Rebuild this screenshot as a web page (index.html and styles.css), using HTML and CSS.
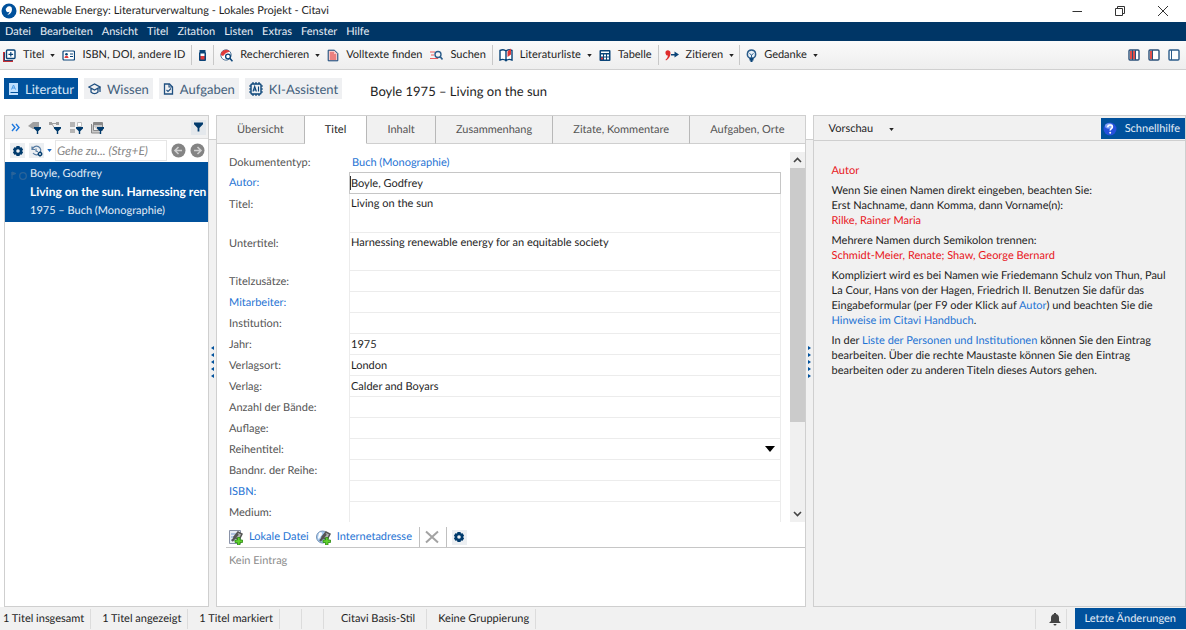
FILE: index.html
```
<!DOCTYPE html>
<html lang="de">
<head>
    <meta charset="UTF-8">
    <meta name="viewport" content="width=device-width, initial-scale=1.0">
    <title>Renewable Energy: Literaturverwaltung - Lokales Projekt - Citavi</title>
    <link rel="stylesheet" href="styles.css">
</head>
<body>
    <!-- Wiederverwendete Symbole -->
    <svg class="sprite" aria-hidden="true">
        <symbol id="caret" viewBox="0 0 6 4"><path d="M0 0h6L3 4z" fill="#222"/></symbol>
        <symbol id="funnel" viewBox="0 0 10 10"><path d="M0 0h10v2L6 6v4H4V6L0 2z" fill="#003a6c"/></symbol>
        <symbol id="gear" viewBox="0 0 12 12">
            <path d="M4.5 1h3l.5 1.5 1.6-.2 1.5 2.5L10 6l1.1 1.2-1.5 2.5-1.6-.2L7.5 11h-3L4 9.5l-1.6.2L.9 7.2 2 6 .9 4.8l1.5-2.5 1.6.2z" fill="#003a6c"/>
            <circle cx="6" cy="6" r="1.8" fill="#eef1f4"/>
        </symbol>
        <symbol id="link-chain" viewBox="0 0 16 16">
            <path d="M6 8l4-5 4 2-3 6z" fill="#b5b5b5" stroke="#555" stroke-width="1.5"/>
            <path d="M4 12l6-7" stroke="#555" stroke-width="2.2"/>
            <path d="M9.500 8.500h2.500v2.500h2.500v2.500H12V16H9.500v-2.500H7V11h2.500z" fill="#5fd02c" stroke="#2c8a12" stroke-width=".8"/>
        </symbol>
    </svg>

    <header class="titlebar">
        <svg class="logo" width="16" height="16" viewBox="0 0 16 16"><circle cx="8" cy="8" r="7.5" fill="#00519c"/><path d="M5.800 4.600a2.800 2.800 0 0 1 5.200 1.600c0 2.800-1.700 5-4.700 5.800 1.300-1.100 2-2.200 2.200-3.400A2.300 2.300 0 0 1 5.800 4.600z" fill="#fff"/></svg>
        <h1>Renewable Energy: Literaturverwaltung - Lokales Projekt - Citavi</h1>
        <div class="window-buttons">
            <button aria-label="Minimieren"><svg width="12" height="12" viewBox="0 0 12 12"><path d="M1.500 6.500h9.500" stroke="#333"/></svg></button>
            <button aria-label="Wiederherstellen"><svg width="12" height="12" viewBox="0 0 12 12"><path d="M1.500 3.500h7v7h-7zM3.500 3.500v-2h7v7h-2" fill="none" stroke="#333"/></svg></button>
            <button aria-label="Schließen"><svg width="12" height="12" viewBox="0 0 12 12"><path d="M1 1l10 10M11 1L1 11" stroke="#333"/></svg></button>
        </div>
    </header>

    <nav class="menubar">
        <a href="#">Datei</a>
        <a href="#">Bearbeiten</a>
        <a href="#">Ansicht</a>
        <a href="#">Titel</a>
        <a href="#">Zitation</a>
        <a href="#">Listen</a>
        <a href="#">Extras</a>
        <a href="#">Fenster</a>
        <a href="#">Hilfe</a>
    </nav>

    <div class="toolbar">
        <button>
            <svg width="13" height="13" viewBox="0 0 13 13"><path d="M1 3v9h9" fill="none" stroke="#c62f35" stroke-width="2"/><path d="M1.500 4v7.500h8" fill="none" stroke="#0a4478" stroke-width=".8"/><rect x="3.500" y="1" width="8.500" height="8.500" rx="1" fill="#fff" stroke="#0a4478" stroke-width="1.400"/><path d="M7.800 3v4.600M5.500 5.300h4.600" stroke="#0a4478" stroke-width="1.200"/></svg>
            <span>Titel</span><svg class="caret"><use href="#caret"/></svg>
        </button>
        <button>
            <svg width="13" height="13" viewBox="0 0 13 13"><rect x="1" y="2" width="11.500" height="9" rx="1" fill="#fff" stroke="#0a4478" stroke-width="1.200"/><circle cx="4.500" cy="5.300" r="1.300" fill="#0a4478"/><path d="M2.500 9c0-3 4-3 4 0z" fill="#e03a3a"/><path d="M8 5h3M8 7.500h3" stroke="#0a4478"/></svg>
            <span>ISBN, DOI, andere ID</span>
        </button>
        <i class="sep"></i>
        <button aria-label="Picker">
            <svg width="9" height="13" viewBox="0 0 9 13"><path d="M1.500 1h6v2h-6z" fill="#0a4478"/><rect x="1" y="3" width="7" height="9" rx="1" fill="#0a4478"/><path d="M2.500 4.500h4v2.500h-4z" fill="#fff"/><path d="M2.500 7h4v3.500h-4z" fill="#e03a3a"/></svg>
        </button>
        <i class="sep"></i>
        <button>
            <svg width="13" height="13" viewBox="0 0 13 13"><circle cx="6" cy="6" r="5.200" fill="#fff" stroke="#55779a"/><path d="M.8 6A5.300 5.300 0 0 1 10 2.500L6 4 3 7z" fill="#e03a3a"/><circle cx="8" cy="7.500" r="2.400" fill="#fff" stroke="#0a4478" stroke-width="1.300"/><path d="M9.800 9.300l2.700 3" stroke="#0a4478" stroke-width="1.600"/></svg>
            <span>Recherchieren</span><svg class="caret"><use href="#caret"/></svg>
        </button>
        <button>
            <svg width="12" height="13" viewBox="0 0 12 13"><path d="M1.200 1.200h6.300l3.300 3.300v7.300H1.200z" fill="#f7c6c6" stroke="#0a4478"/><path d="M3 4h4M3 6h6M3 8h6M3 10h6" stroke="#e03a3a" stroke-width="1.200"/></svg>
            <span>Volltexte finden</span>
        </button>
        <button>
            <svg width="13" height="13" viewBox="0 0 13 13"><path d="M0 3h5M1 6h3M0 9.500h8" stroke="#ec5a5a" stroke-width="1.200"/><circle cx="8" cy="5.500" r="3" fill="none" stroke="#2b5c8a" stroke-width="1.400"/><path d="M10 7.500l2.500 3" stroke="#2b5c8a" stroke-width="1.600"/></svg>
            <span>Suchen</span>
        </button>
        <i class="sep"></i>
        <button>
            <svg width="14" height="14" viewBox="0 0 14 14"><path d="M1 2.500c2-1 4.500-1 6 .5 1.500-1.500 4-1.500 6-.5v9.500c-2-.8-4.500-.8-6 .8-1.500-1.600-4-1.600-6-.8zM7 3v9" fill="#fff" stroke="#0a4478" stroke-width="1.400"/><path d="M8.500 9V3.500L12 .5v6z" fill="#e03a3a"/></svg>
            <span>Literaturliste</span><svg class="caret"><use href="#caret"/></svg>
        </button>
        <button>
            <svg width="12" height="13" viewBox="0 0 12 13"><rect x=".5" y="1" width="11" height="11" rx="1" fill="#0a4478"/><path d="M2 2.500h8v1.500H2zM2 5.500h2v2H2zM5 5.500h2v2H5zM8 5.500h2v2H8zM5 8.500h2v2H5zM8 8.500h2v2H8z" fill="#fff"/><path d="M2 8.500h2v2H2z" fill="#e03a3a"/></svg>
            <span>Tabelle</span>
        </button>
        <i class="sep"></i>
        <button>
            <svg width="14" height="13" viewBox="0 0 14 13"><path d="M.8 2.200C2 .5 5.500.8 5.500 4c0 3-1.500 5.800-4.500 7.500l-.5-.7c1.600-1.300 2.300-2.800 2.400-4.200C1 6.800-.2 4 .8 2.200z" fill="#df2b2b"/><path d="M6 5h3.500V2.500L14 5.500 9.500 8.500V6.500H6z" fill="#0a4478"/></svg>
            <span>Zitieren</span><svg class="caret"><use href="#caret"/></svg>
        </button>
        <i class="sep"></i>
        <button>
            <svg width="11" height="13" viewBox="0 0 11 13"><path d="M3.500 9C0 6.500.8 1 5.500 1s5.500 5.500 2 8z" fill="#e8f0f7" stroke="#2b5c8a" stroke-width="1.400"/><path d="M3.500 4.500l2 1.500 2-1.500M5.500 6v3" fill="none" stroke="#2b5c8a"/><path d="M3.500 9h4v2.500h-1V13h-2v-1.500h-1z" fill="#0a4478"/></svg>
            <span>Gedanke</span><svg class="caret"><use href="#caret"/></svg>
        </button>
        <div class="layouts">
            <button aria-label="Drei Spalten"><svg width="12" height="12" viewBox="0 0 12 12"><rect x="1" y="1" width="10" height="10" rx="1" fill="#fff" stroke="#2b5078" stroke-width="1.400"/><path d="M2 2h5v8H2z" fill="#e0504a"/><path d="M4.500 1v10M7.500 1v10" stroke="#2b5078"/></svg></button>
            <button aria-label="Zwei Spalten"><svg width="12" height="12" viewBox="0 0 12 12"><rect x="1" y="1" width="10" height="10" rx="1" fill="#fff" stroke="#2b5078" stroke-width="1.400"/><path d="M2 2h2v8H2z" fill="#e0504a"/><path d="M4.500 1v10" stroke="#2b5078"/></svg></button>
            <button aria-label="Eine Spalte"><svg width="12" height="12" viewBox="0 0 12 12"><rect x="1" y="1" width="10" height="10" rx="1" fill="#fff" stroke="#2b5c8a" stroke-width="1.400"/><path d="M3.500 1v10" stroke="#2b5c8a"/></svg></button>
        </div>
    </div>

    <div class="workspaces">
        <button class="active">
            <svg width="11" height="12" viewBox="0 0 11 12"><path d="M1 0h9v9H2.500v1H10v2H1z" fill="#bfe0ff"/><path d="M3.500 6.500L5.500 2l2 4.500M4.200 5h2.600" fill="none" stroke="#4a9be6"/></svg>
            <span>Literatur</span>
        </button>
        <button>
            <svg width="13" height="12" viewBox="0 0 13 12"><path d="M1 4l5.500-3L12 4 6.500 7zM3 5.500V9c2 2 5 2 7 0V5.500M12 4v5" fill="none" stroke="#1f4f80" stroke-width="1.300"/></svg>
            <span>Wissen</span>
        </button>
        <button>
            <svg width="11" height="12" viewBox="0 0 11 12"><path d="M1.500 1h5L9.500 4v7h-8z" fill="none" stroke="#1f4f80" stroke-width="1.300"/><path d="M6 1v3h3.500M3.500 7l1.500 1.500L8 5.500" fill="none" stroke="#1f4f80" stroke-width="1.100"/></svg>
            <span>Aufgaben</span>
        </button>
        <button>
            <svg width="14" height="14" viewBox="0 0 14 14"><path d="M4 0v14M7 0v14M10 0v14M0 4h14M0 7h14M0 10h14" stroke="#0a4478" stroke-width="1.200"/><rect x="2" y="2" width="10" height="10" rx="1" fill="#eef1f4" stroke="#0a4478" stroke-width="1.400"/><path d="M4 9.500L5.700 4.500l1.700 5M4.700 8h2M9.500 4.500v5" fill="none" stroke="#0a4478" stroke-width="1.100"/></svg>
            <span>KI-Assistent</span>
        </button>
        <h2>Boyle 1975 – Living on the sun</h2>
    </div>

    <main>
        <section class="panel list">
            <div class="filters">
                <button aria-label="Erweitern"><svg width="9" height="9" viewBox="0 0 9 9"><path d="M1 1l3 3.500L1 8M5 1l3 3.500L5 8" fill="none" stroke="#1c78e0" stroke-width="1.400"/></svg></button>
                <button aria-label="Schlagwörter"><svg width="13" height="13" viewBox="0 0 13 13"><path d="M0 5l5-4h6v7H5z" fill="#a0a0a0"/><use href="#funnel" x="6" y="6" width="7" height="7"/></svg></button>
                <button aria-label="Kategorien"><svg width="13" height="13" viewBox="0 0 13 13"><path d="M0 1h3v3H0zM7 1h3v3H7z" fill="#a0a0a0"/><path d="M3 2.500h4M3 3l3 5" fill="none" stroke="#a0a0a0"/><use href="#funnel" x="5" y="6" width="7" height="7"/></svg></button>
                <button aria-label="Gruppen"><svg width="13" height="13" viewBox="0 0 13 13"><path d="M0 1h5v5H0zM0 8h5v4H0z" fill="#b5b5b5"/><path d="M7.500 1.500h4v4h-4z" fill="#fff" stroke="#c0c0c0"/><use href="#funnel" x="6" y="6" width="7" height="7"/></svg></button>
                <button aria-label="Importe"><svg width="13" height="13" viewBox="0 0 13 13"><path d="M.5 3v9h9M2.500 1.500h9v8h-9z" fill="#c9c9c9" stroke="#8a8a8a"/><path d="M2 2h10v2H2z" fill="#8a8a8a"/><use href="#funnel" x="6" y="6" width="7" height="7"/></svg></button>
                <button class="boxed end" aria-label="Filter"><svg width="9" height="10"><use href="#funnel"/></svg></button>
            </div>
            <div class="search">
                <button class="boxed" aria-label="Einstellungen"><svg width="12" height="12"><use href="#gear"/></svg></button>
                <button class="boxed history" aria-label="Verlauf"><svg width="12" height="12" viewBox="0 0 12 12"><path d="M1 1.500v3h3M1.300 4.500A4.300 4.300 0 1 1 2 8M5 3.500V6l2 .8" fill="none" stroke="#587da3" stroke-width="1.200"/><use href="#gear" x="6" y="6" width="6" height="6"/></svg></button>
                <svg class="caret" viewBox="0 0 6 4"><path d="M0 0h6L3 4z" fill="#1c68c0"/></svg>
                <input type="text" placeholder="Gehe zu... (Strg+E)" aria-label="Gehe zu">
                <button class="round" aria-label="Zurück"><svg width="15" height="15" viewBox="0 0 15 15"><circle cx="7.500" cy="7.500" r="7" fill="#848484"/><path d="M7.500 4L4 7.500 7.500 11M4 7.500h7" fill="none" stroke="#d0d0d0" stroke-width="1.600"/></svg></button>
                <button class="round" aria-label="Vor"><svg width="15" height="15" viewBox="0 0 15 15"><circle cx="7.500" cy="7.500" r="7" fill="#848484"/><path d="M7.500 4L11 7.500 7.500 11M11 7.500H4" fill="none" stroke="#d0d0d0" stroke-width="1.600"/></svg></button>
            </div>
            <article class="entry">
                <svg width="18" height="12" viewBox="0 0 18 12"><path d="M2 3v7M2 3l4 1.500L2 6z" fill="#2a649a" stroke="#2a649a"/><circle cx="13" cy="7" r="3.300" fill="none" stroke="#2a649a" stroke-width="1.300"/></svg>
                <div>
                    <p>Boyle, Godfrey</p>
                    <p><b>Living on the sun. Harnessing ren</b></p>
                    <p>1975 – Buch (Monographie)</p>
                </div>
            </article>
        </section>

        <div class="splitter"><i></i><i></i><i></i><i></i><i></i></div>

        <section class="panel details">
            <div class="tabs" role="tablist">
                <button role="tab">Übersicht</button>
                <button role="tab" class="active" aria-selected="true">Titel</button>
                <button role="tab">Inhalt</button>
                <button role="tab">Zusammenhang</button>
                <button role="tab">Zitate, Kommentare</button>
                <button role="tab">Aufgaben, Orte</button>
            </div>
            <div class="scroll">
                <form>
                    <span>Dokumententyp:</span><a class="type" href="#">Buch (Monographie)</a>
                    <label for="autor" class="link">Autor:</label><input id="autor" type="text" value="Boyle, Godfrey">
                    <label for="titel">Titel:</label><textarea id="titel">Living on the sun</textarea>
                    <label for="untertitel">Untertitel:</label><textarea id="untertitel">Harnessing renewable energy for an equitable society</textarea>
                    <label for="zusatz">Titelzusätze:</label><input id="zusatz" type="text">
                    <label for="mitarbeiter" class="link">Mitarbeiter:</label><input id="mitarbeiter" type="text">
                    <label for="institution">Institution:</label><input id="institution" type="text">
                    <label for="jahr">Jahr:</label><input id="jahr" type="text" value="1975">
                    <label for="ort">Verlagsort:</label><input id="ort" type="text" value="London">
                    <label for="verlag">Verlag:</label><input id="verlag" type="text" value="Calder and Boyars">
                    <label for="baende">Anzahl der Bände:</label><input id="baende" type="text">
                    <label for="auflage">Auflage:</label><input id="auflage" type="text">
                    <label for="reihe">Reihentitel:</label>
                    <div class="select"><select id="reihe"><option></option></select><svg width="10" height="6" viewBox="0 0 10 6"><path d="M0 0h10L5 6z"/></svg></div>
                    <label for="bandnr">Bandnr. der Reihe:</label><input id="bandnr" type="text">
                    <label for="isbn" class="link">ISBN:</label><input id="isbn" type="text">
                    <label for="medium">Medium:</label><input id="medium" type="text">
                </form>
                <div class="scrollbar">
                    <button aria-label="Nach oben"><svg width="9" height="6" viewBox="0 0 9 6"><path d="M1 5l3.500-3.500L8 5" fill="none" stroke="#444" stroke-width="1.600"/></svg></button>
                    <div class="track"><div class="thumb"></div></div>
                    <button aria-label="Nach unten"><svg width="9" height="6" viewBox="0 0 9 6"><path d="M1 1l3.500 3.500L8 1" fill="none" stroke="#444" stroke-width="1.600"/></svg></button>
                </div>
            </div>
            <div class="attachments">
                <a href="#"><svg width="16" height="16" viewBox="0 0 16 16"><path d="M1.500 1.500h11v13h-11z" fill="#e9edf5" stroke="#8a93a8"/><path d="M3 5h5M3 8h4M3 11h4" stroke="#7a9ad0"/><use href="#link-chain"/></svg>Lokale Datei</a>
                <a href="#"><svg width="16" height="16" viewBox="0 0 16 16"><circle cx="6.500" cy="8" r="6" fill="#a9ccf0" stroke="#7592b5"/><path d="M3 4c3-2 4 1 2 3s-2 4-3 2z" fill="#fff"/><use href="#link-chain"/></svg>Internetadresse</a>
                <i></i>
                <button aria-label="Entfernen"><svg width="14" height="14" viewBox="0 0 14 14"><path d="M1 1.500l12 11M13 1.500l-12 11" stroke="#a3a3a3" stroke-width="2"/></svg></button>
                <i></i>
                <button class="boxed" aria-label="Optionen"><svg width="12" height="12"><use href="#gear"/></svg></button>
            </div>
            <p class="empty">Kein Eintrag</p>
        </section>

        <div class="splitter right"><i></i><i></i><i></i><i></i><i></i></div>

        <aside class="panel help">
            <div class="help-tabs">
                <button>Vorschau<svg class="caret"><use href="#caret"/></svg></button>
                <button class="active"><svg width="14" height="14" viewBox="0 0 14 14"><circle cx="7" cy="7" r="6.500" fill="#2450dc"/><ellipse cx="6" cy="4" rx="4" ry="2.800" fill="#7fa0f5"/><path d="M4.800 5.200c0-3 4.600-2.800 4.600-.2C9.400 6.700 7.200 6.600 7.200 8.500" fill="none" stroke="#fff" stroke-width="1.600"/><circle cx="7.200" cy="10.800" r="1" fill="#fff"/></svg>Schnellhilfe</button>
            </div>
            <div class="help-text">
                <p class="red">Autor</p>
                <p>Wenn Sie einen Namen direkt eingeben, beachten Sie:<br>Erst Nachname, dann Komma, dann Vorname(n):<br><span class="red">Rilke, Rainer Maria</span></p>
                <p>Mehrere Namen durch Semikolon trennen:<br><span class="red">Schmidt-Meier, Renate; Shaw, George Bernard</span></p>
                <p>Kompliziert wird es bei Namen wie Friedemann Schulz von Thun, Paul La Cour, Hans von der Hagen, Friedrich II. Benutzen Sie dafür das Eingabeformular (per F9 oder Klick auf <a href="#">Autor</a>) und beachten Sie die <a href="#">Hinweise im Citavi Handbuch</a>.</p>
                <p>In der <a href="#">Liste der Personen und Institutionen</a> können Sie den Eintrag bearbeiten. Über die rechte Maustaste können Sie den Eintrag bearbeiten oder zu anderen Titeln dieses Autors gehen.</p>
            </div>
        </aside>
    </main>

    <footer class="statusbar">
        <span>1 Titel insgesamt</span>
        <span>1 Titel angezeigt</span>
        <span>1 Titel markiert</span>
        <span class="blank"></span>
        <span class="blank"></span>
        <span class="style">Citavi Basis-Stil</span>
        <span>Keine Gruppierung</span>
        <button class="bell" aria-label="Benachrichtigungen"><svg width="12" height="14" viewBox="0 0 12 14"><path d="M5 1h2v1c2 .5 3 2 3 4v3l2 2H0l2-2V6c0-2 1-3.500 3-4zM4.500 12h3a1.500 1.500 0 0 1-3 0z" fill="#444"/></svg></button>
        <button class="changes">Letzte Änderungen</button>
    </footer>
</body>
</html>
```
FILE: styles.css
```
* {
    box-sizing: border-box;
}
body {
    margin: 0;
    height: 100vh;
    display: flex;
    flex-direction: column;
    background: #fff;
    color: #1e1e1e;
    font: 11px/16px Lato, "Open Sans", sans-serif;
    text-rendering: geometricPrecision;
}
button, input, textarea, select {
    font: inherit;
    color: inherit;
    text-rendering: inherit;
    margin: 0;
    padding: 0;
    border: 0;
    border-radius: 0;
    background: none;
    outline: 0;
}
button {
    display: flex;
    align-items: center;
    white-space: nowrap;
}
h1, h2, p {
    margin: 0;
    font-size: inherit;
    font-weight: normal;
}
a {
    color: #1f74d4;
    text-decoration: none;
}
svg {
    flex: none;
}
.sprite {
    position: absolute;
    width: 0;
    height: 0;
}
.caret {
    width: 5px;
    height: 3px;
    margin: 0 -1px;
}
.boxed {
    background: #eceff2;
    justify-content: center;
    width: 15px;
    height: 15px;
}

/* Titelleiste und Menü */
.titlebar {
    display: flex;
    align-items: center;
    height: 22px;
    padding: 0 17px 0 1px;
    gap: 2px;
}
.window-buttons {
    display: flex;
    gap: 31px;
    margin-left: auto;
}
.menubar {
    display: flex;
    align-items: center;
    height: 19px;
    padding: 0 5px;
    gap: 9px;
    background: #003666;
}
.menubar a {
    color: #e6edf5;
}

/* Werkzeugleiste */
.toolbar {
    display: flex;
    align-items: center;
    height: 29px;
    padding: 0 6px 0 3px;
    gap: 8px;
    background: linear-gradient(#fafafa, #eee);
    border-bottom: 1px solid #d0d0d0;
}
.toolbar button {
    gap: 7px;
}
.sep {
    width: 1px;
    height: 20px;
    margin: 0 -2px;
    background: #c8c8c8;
}
.layouts {
    display: flex;
    gap: 8px;
    margin-left: auto;
}

.workspaces {
    display: flex;
    align-items: center;
    height: 45px;
    padding: 0 4px 8px;
    gap: 6px;
    font-size: 13px;
}
.workspaces button {
    height: 21px;
    padding: 0 4px;
    gap: 6px;
    background: #eff0f2;
    color: #44607c;
}
.workspaces button.active {
    background: #00519c;
    color: #d5e6f7;
}
.workspaces h2 {
    margin-left: 22px;
    padding-top: 4px;
}

/* Arbeitsbereich */
main {
    flex: 1;
    min-height: 0;
    display: flex;
    padding-left: 4px;
}
.panel {
    display: flex;
    flex-direction: column;
    min-width: 0;
    background: #fff;
    border: 1px solid #cfcfcf;
}
.splitter {
    flex: none;
    width: 7px;
    margin-top: 24px;
    padding-bottom: 24px;
    border-top: 1px solid #cfcfcf;
    background: #f1f1f1;
    display: flex;
    flex-direction: column;
    align-items: center;
    justify-content: center;
    gap: 3px;
}
.splitter i {
    border: 2px solid transparent;
    border-left: 0;
    border-right: 3px solid #00519c;
}
.splitter.right i {
    border-right: 0;
    border-left: 3px solid #00519c;
}

.list {
    flex: none;
    width: 205px;
}
.filters {
    display: flex;
    align-items: center;
    height: 23px;
    padding: 0 2px 0 6px;
    gap: 8px;
    background: #f1f1f1;
    border-bottom: 1px solid #ddd;
}
.filters .end {
    margin-left: auto;
    background: #e4e8ec;
}
.search {
    display: flex;
    align-items: center;
    height: 23px;
    padding: 0 3px 0 5px;
    gap: 4px;
}
.search input {
    flex: 1;
    min-width: 0;
    height: 21px;
    padding-left: 1px;
    border: 1px solid #e6e6e6;
    font-size: 12px;
    font-style: italic;
}
.search input::placeholder {
    color: #858585;
}
.entry {
    display: flex;
    align-items: flex-start;
    gap: 2px;
    height: 60px;
    padding: 3px 2px 2px 5px;
    background: #00519c;
    color: #e3edf7;
    white-space: nowrap;
    overflow: hidden;
}
.entry svg {
    margin-top: 4px;
}
.entry p {
    line-height: 18px;
}
.entry b {
    color: #fff;
    font-size: 12px;
}

/* Formular */
.details {
    flex: 590 1 0;
}
.tabs {
    display: flex;
    height: 28px;
}
.tabs button {
    flex: 1 1 auto;
    justify-content: center;
    background: #f1f1f1;
    border-right: 1px solid #b8b8b8;
    border-bottom: 1px solid #cfcfcf;
    color: #555;
}
.tabs button:last-child {
    border-right: 0;
}
.tabs button.active {
    background: #fff;
    border-bottom-color: #fff;
    color: #1e1e1e;
}
.scroll {
    flex: 1;
    min-height: 0;
    display: flex;
    margin-top: 8px;
    gap: 9px;
    overflow: hidden;
}
form {
    flex: 1;
    display: grid;
    grid-template-columns: 120px 1fr;
    grid-template-rows: 20px 22px 39px 38px;
    grid-auto-rows: 21px;
    padding-left: 12px;
    color: #555;
    line-height: 22px;
}
form .link {
    color: #1f74d4;
}
form .type {
    padding-left: 3px;
}
form input, form textarea, .select {
    width: 100%;
    height: 100%;
    padding: 0 1px;
    border: 1px solid #ececec;
    border-top: 0;
    color: #1e1e1e;
    resize: none;
    line-height: 20px;
}
form textarea {
    display: block;
    overflow: hidden;
}
form #autor {
    border: 1px solid #c6c6c6;
    background: linear-gradient(#333, #333) 0 3px / 1px 14px no-repeat;
}
.select {
    display: flex;
    align-items: center;
    padding-right: 5px;
}
.select select {
    flex: 1;
    appearance: none;
}
.scrollbar {
    width: 15px;
    display: flex;
    flex-direction: column;
    background: #f0f0f0;
}
.scrollbar button {
    height: 16px;
    justify-content: center;
}
.track {
    flex: 1;
}
.thumb {
    height: 75%;
    background: #cbcbcb;
}
.attachments {
    display: flex;
    align-items: center;
    height: 26px;
    margin-left: 9px;
    padding: 5px 0 0 2px;
    gap: 7px;
    border-bottom: 1px solid #c6c6c6;
}
.attachments a {
    display: flex;
    align-items: center;
    gap: 5px;
}
.attachments i {
    width: 1px;
    height: 100%;
    margin-right: -2px;
    background: #c0c0c0;
}
.empty {
    height: 58px;
    padding: 5px 12px;
    color: #8c8c8c;
}

/* Schnellhilfe */
.help {
    flex: 373 1 0;
    background: #f1f1f1;
}
.help-tabs {
    display: flex;
    justify-content: space-between;
    height: 25px;
    padding-top: 2px;
    padding-left: 15px;
    border-bottom: 1px solid #cfcfcf;
}
.help-tabs button {
    gap: 17px;
}
.help-tabs .active {
    height: 21px;
    padding: 0 5px 0 2px;
    gap: 8px;
    background: #00519c;
    color: #e3edf7;
}
.help-text {
    padding: 22px 12px 0 18px;
    line-height: 15px;
}
.help-text p {
    margin-bottom: 5px;
}
.red {
    color: #e8151b;
}

/* Statusleiste */
.statusbar {
    display: flex;
    align-items: center;
    height: 23px;
    background: #f1f1f1;
}
.statusbar span {
    height: 20px;
    padding: 2px 6px 0 11px;
    border-right: 1px solid #dcdcdc;
}
.statusbar span:first-child {
    padding-left: 3px;
}
.statusbar .blank {
    width: 22px;
    padding: 0;
}
.statusbar .style {
    padding: 2px 11px 0 17px;
}
.bell {
    height: 20px;
    margin-left: auto;
    padding: 0 5px 0 13px;
    border: solid #dcdcdc;
    border-width: 0 1px;
}
.changes {
    height: 21px;
    margin-left: 8px;
    padding: 0 10px;
    background: #00519c;
    color: #e3edf7;
}
```
